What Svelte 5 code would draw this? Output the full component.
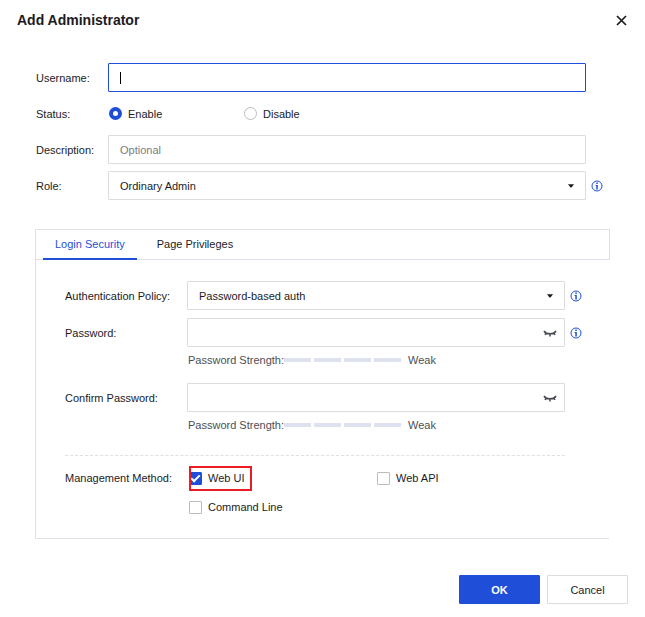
<script>
    let username = $state('')
    let status = $state('enable')
    let description = $state('')
    let role = $state('ordinary')
    let policy = $state('password')
    let activeTab = $state('login')

    let passwords = $state([
        { id: 'password', label: 'Password:', value: '', visible: false, info: true },
        { id: 'confirm', label: 'Confirm Password:', value: '', visible: false, info: false }
    ])

    let methods = $state([
        { id: 'web-ui', label: 'Web UI', checked: true, marked: true },
        { id: 'web-api', label: 'Web API', checked: false },
        { id: 'cli', label: 'Command Line', checked: false }
    ])

    const tabs = [
        { id: 'login', label: 'Login Security' },
        { id: 'privileges', label: 'Page Privileges' }
    ]

    const submit = (event) => {
        event.preventDefault()
    }
</script>

{#snippet infoIcon()}
    <svg class="info" viewBox="0 0 12 12" role="img" aria-label="Info">
        <circle cx="6" cy="6" r="5" fill="none" stroke="currentColor" />
        <path d="M5.3 2.6h1.5v1.3H5.3zM4.6 5h2.2v4.4H5.3V6h-.7z" fill="currentColor" />
    </svg>
{/snippet}

{#snippet arrow()}
    <svg class="arrow" viewBox="0 0 6 4" aria-hidden="true">
        <path d="M0 0.3h6L3.5 3.6h-1z" fill="currentColor" />
    </svg>
{/snippet}

<form class="dialog" onsubmit={submit}>
    <header>
        <h1>Add Administrator</h1>
        <button type="button" class="close" aria-label="Close">
            <svg viewBox="0 0 11 11" aria-hidden="true">
                <path d="M1 1l9 9M10 1l-9 9" fill="none" stroke="currentColor" stroke-width="1.7" />
            </svg>
        </button>
    </header>

    <div class="fields">
        <div class="row">
            <label for="username">Username:</label>
            <div class="control">
                <input type="text" id="username" class="box active" bind:value={username} />
                {#if !username}
                    <span class="caret"></span>
                {/if}
            </div>
        </div>

        <div class="row">
            <span id="status-label">Status:</span>
            <div class="radios" role="radiogroup" aria-labelledby="status-label">
                <label class="choice"><input type="radio" name="status" value="enable" bind:group={status} />Enable</label>
                <label class="choice"><input type="radio" name="status" value="disable" bind:group={status} />Disable</label>
            </div>
        </div>

        <div class="row">
            <label for="description">Description:</label>
            <input type="text" id="description" class="box" bind:value={description} placeholder="Optional" />
        </div>

        <div class="row">
            <label for="role">Role:</label>
            <div class="control">
                <select id="role" class="box" bind:value={role}>
                    <option value="ordinary">Ordinary Admin</option>
                </select>
                {@render arrow()}
            </div>
            {@render infoIcon()}
        </div>
    </div>

    <div class="tabs" role="tablist">
        {#each tabs as tab}
            <button
                type="button"
                role="tab"
                class="tab"
                class:selected={activeTab === tab.id}
                aria-selected={activeTab === tab.id}
                onclick={() => (activeTab = tab.id)}>{tab.label}</button>
        {/each}
    </div>

    <div class="panel">
        <div class="row">
            <label for="policy">Authentication Policy:</label>
            <div class="control">
                <select id="policy" class="box" bind:value={policy}>
                    <option value="password">Password-based auth</option>
                </select>
                {@render arrow()}
            </div>
            {@render infoIcon()}
        </div>

        {#each passwords as field}
            <div class="password">
                <div class="row">
                    <label for={field.id}>{field.label}</label>
                    <div class="control">
                        <input type={field.visible ? 'text' : 'password'} id={field.id} class="box" bind:value={field.value} />
                        <button type="button" class="eye" aria-label="Show password" onclick={() => (field.visible = !field.visible)}>
                            <svg viewBox="0 0 14 7" aria-hidden="true">
                                <path d="M1 1C3.5 4.8 10.5 4.8 13 1M3.2 2.8L2 4.8M7 4v2.4M10.8 2.8L12 4.8" fill="none" stroke="currentColor" stroke-width="1.5" />
                            </svg>
                        </button>
                    </div>
                    {#if field.info}
                        {@render infoIcon()}
                    {/if}
                </div>
                <div class="strength">
                    <span>Password Strength:</span>
                    <div class="bars"><i></i><i></i><i></i><i></i></div>
                    <span>Weak</span>
                </div>
            </div>
        {/each}

        <div class="row methods">
            <span id="method-label">Management Method:</span>
            <div class="checks" role="group" aria-labelledby="method-label">
                {#each methods as method}
                    <label class="choice" class:marked={method.marked}>
                        <input type="checkbox" id={method.id} bind:checked={method.checked} />{method.label}
                    </label>
                {/each}
            </div>
        </div>
    </div>

    <footer>
        <button type="submit" class="btn primary">OK</button>
        <button type="button" class="btn">Cancel</button>
    </footer>
</form>

<style>
    :global(body) {
        margin: 0;
        background: #fff;
    }

    .dialog, .dialog button, .dialog input, .dialog select {
        font-family: "Liberation Sans", Arial, sans-serif;
        font-size: 11px;
        color: #1b1b1f;
        box-sizing: border-box;
    }

    header {
        display: flex;
        align-items: center;
        justify-content: space-between;
        height: 40px;
        padding: 0 17px;
        margin-bottom: 23px;
    }

    h1 {
        margin: 0;
        font-size: 14px;
        line-height: 20px;
    }

    button {
        padding: 0;
        border: 0;
        background: none;
        cursor: pointer;
    }

    .close svg {
        display: block;
        width: 13px;
        height: 11px;
    }

    .fields {
        display: flex;
        flex-direction: column;
        gap: 7px;
        margin: 0 35px 29px 36px;
    }

    .row {
        display: grid;
        grid-template-columns: 72px 1fr 24px;
        align-items: center;
        min-height: 29px;
    }

    .control {
        position: relative;
    }

    .dialog .box {
        display: block;
        width: 100%;
        height: 29px;
        padding: 0 11px;
        border: 1px solid #dcdcdf;
        border-radius: 1px;
        background: #fff;
        outline: none;
        appearance: none;
    }

    .dialog .box.active {
        border-color: #1f4fd8;
    }

    .box::placeholder {
        color: #7b7b80;
    }

    .caret {
        position: absolute;
        left: 12px;
        top: 9px;
        width: 1px;
        height: 12px;
        background: #000;
    }

    .arrow {
        position: absolute;
        right: 12px;
        top: 13px;
        width: 6px;
        height: 4px;
        pointer-events: none;
    }

    .info {
        width: 12px;
        height: 12px;
        margin-left: 5px;
        color: #1f4fd8;
    }

    .radios {
        display: grid;
        grid-template-columns: 135px 1fr;
        padding-left: 1px;
    }

    .choice {
        position: relative;
        display: flex;
        align-items: center;
        justify-self: start;
        gap: 6px;
    }

    .choice input {
        width: 13px;
        height: 13px;
        margin: 0;
        border: 1px solid #bcbcbf;
        border-radius: 1px;
        appearance: none;
        background: #fff;
    }

    .choice input[type='radio'] {
        border-radius: 50%;
    }

    .choice input[type='radio']:checked {
        border: 4px solid #1f4fd8;
    }

    .choice input[type='checkbox']:checked {
        border-color: #1f4fd8;
        background: #1f4fd8;
    }

    .choice input[type='checkbox']:checked::before {
        content: '';
        display: block;
        width: 7px;
        height: 3px;
        margin: 2px 0 0 1px;
        border: solid #fff;
        border-width: 0 0 2px 2px;
        transform: rotate(-45deg);
    }

    .tabs {
        display: flex;
        gap: 8px;
        height: 31px;
        margin: 0 35px;
        padding: 0 7px;
        border: 1px solid #dfdfe9;
        box-sizing: border-box;
    }

    .dialog .tab {
        height: 30px;
        padding: 0 12px;
        border-bottom: 2px solid transparent;
    }

    .dialog .tab.selected {
        color: #1f4fd8;
        border-color: #1f4fd8;
    }

    .panel {
        display: flex;
        flex-direction: column;
        gap: 8px;
        margin: 0 36px 36px 35px;
        padding: 21px 0 16px 29px;
        border: solid #dfdfe9;
        border-width: 0 0 1px 1px;
    }

    .panel .row {
        grid-template-columns: 122px 1fr 44px;
    }

    .panel .eye {
        position: absolute;
        right: 8px;
        top: 12px;
    }

    .eye svg {
        display: block;
        width: 14px;
        height: 7px;
        color: #45484f;
    }

    .password {
        padding-bottom: 8px;
    }

    .strength {
        display: flex;
        align-items: center;
        margin: 6px 0 0 123px;
        line-height: 14px;
        color: #4c4f56;
    }

    .bars {
        display: flex;
        gap: 3px;
        margin-right: 7px;
    }

    .bars i {
        width: 27px;
        height: 4px;
        background: #dfe2ee;
    }

    .methods {
        position: relative;
        margin-top: 16px;
    }

    .methods::before {
        content: '';
        position: absolute;
        left: 0;
        right: 44px;
        top: -9px;
        border-top: 1px dashed #dfdfe9;
    }

    .panel .methods {
        align-items: start;
        line-height: 29px;
    }

    .checks {
        display: grid;
        grid-template-columns: 1fr 1fr;
        padding-left: 2px;
    }

    /* red frame drawn over the option */
    .marked::after {
        content: '';
        position: absolute;
        inset: 2px -8px 2px 0;
        border: 2px solid #ec1c24;
        pointer-events: none;
    }

    footer {
        display: flex;
        justify-content: flex-end;
        gap: 7px;
        padding: 0 17px 13px;
    }

    .dialog .btn {
        width: 81px;
        height: 29px;
        border: 1px solid #dcdcdf;
        border-radius: 1px;
    }

    .dialog .btn.primary {
        border-color: #1f4fd8;
        background: #1f4fd8;
        color: #fff;
        font-weight: bold;
    }
</style>
